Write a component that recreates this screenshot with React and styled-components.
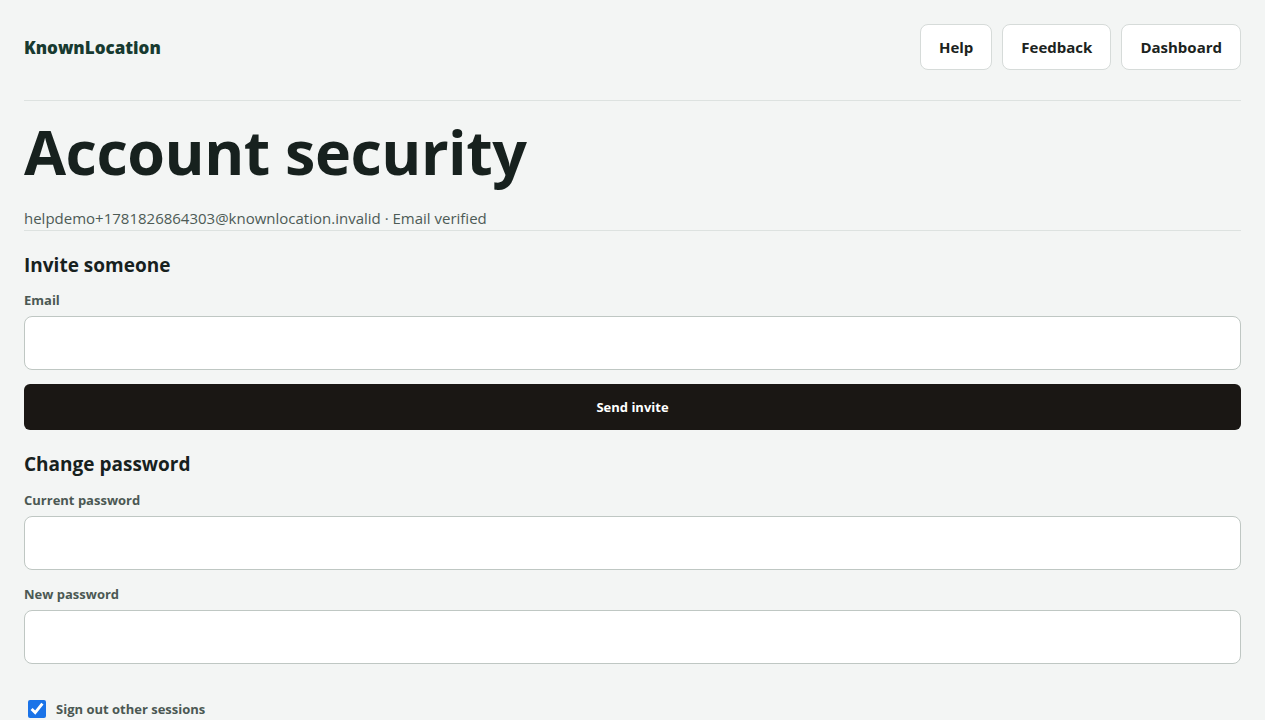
import React from 'react'
import styled, { createGlobalStyle } from 'styled-components';

const GlobalStyle = createGlobalStyle`
  html, body {
    margin: 0;
    padding: 0;
    background: #f3f5f4;
  }
  body {
    font-family: "Open Sans", "Noto Sans", "Liberation Sans", sans-serif;
    color: #17211e;
  }
  * { box-sizing: border-box; }
`;

const App = () => {
  return (
    <>
      <GlobalStyle />
      <Page>
        <Header>
          <Logo>KnownLocation</Logo>
          <Nav>
            <NavButton>Help</NavButton>
            <NavButton>Feedback</NavButton>
            <NavButton>Dashboard</NavButton>
          </Nav>
        </Header>

        <Title>Account security</Title>
        <Meta>helpdemo+1781826864303@knownlocation.invalid · Email verified</Meta>

        <Section>
          <SectionTitle>Invite someone</SectionTitle>
          <Field>
            <Label>Email</Label>
            <Input type="email" />
          </Field>
          <PrimaryButton>Send invite</PrimaryButton>
        </Section>

        <Section>
          <SectionTitle>Change password</SectionTitle>
          <Field $spaced>
            <Label>Current password</Label>
            <Input type="password" />
          </Field>
          <Field $spaced>
            <Label>New password</Label>
            <Input type="password" />
          </Field>
          <CheckRow>
            <Checkbox type="checkbox" defaultChecked />
            Sign out other sessions
          </CheckRow>
        </Section>
      </Page>
    </>
  )
}

export default App;

const Page = styled.div`
    padding: 24px 24px 40px;
`;

const Header = styled.header`
    display: flex;
    justify-content: space-between;
    align-items: center;
    padding-bottom: 30px;
    border-bottom: 1px solid #dde2e0;
`;

const Logo = styled.div`
    font-size: 17px;
    font-weight: 800;
    color: #173a30;
`;

const Nav = styled.nav`
    display: flex;
    gap: 10px;
`;

const NavButton = styled.button`
    height: 46px;
    padding: 0 18px;
    background: #ffffff;
    border: 1px solid #d6dbd9;
    border-radius: 8px;
    font-family: inherit;
    font-size: 15px;
    font-weight: 700;
    color: #1b2320;
    cursor: pointer;
`;

const Title = styled.h1`
    margin: 13px 0 0;
    font-size: 61px;
    font-weight: 700;
    line-height: 76px;
    letter-spacing: -0.5px;
    color: #17211e;
`;

const Meta = styled.p`
    margin: 18px 0 0;
    padding-bottom: 2px;
    font-size: 15px;
    color: #4d5b56;
    border-bottom: 1px solid #dde2e0;
`;

const Section = styled.section`
    display: flex;
    flex-direction: column;
    gap: 14px;
    margin-top: 20px;
`;

const SectionTitle = styled.h2`
    margin: 0 0 -2px;
    font-size: 19px;
    font-weight: 700;
    color: #17211e;
    line-height: 28px;
`;

const Field = styled.label`
    display: flex;
    flex-direction: column;
    gap: 7px;
    margin-top: ${props => props.$spaced ? '1px' : '0'};
`;

const Label = styled.span`
    font-size: 13px;
    font-weight: 700;
    color: #4b5853;
`;

const Input = styled.input`
    height: 54px;
    width: 100%;
    padding: 0 14px;
    background: #ffffff;
    border: 1px solid #bfc7c3;
    border-radius: 8px;
    font-family: inherit;
    font-size: 16px;
`;

const PrimaryButton = styled.button`
    height: 46px;
    width: 100%;
    background: #1a1714;
    color: #ffffff;
    border: none;
    border-radius: 6px;
    font-family: inherit;
    font-size: 13px;
    font-weight: 700;
    cursor: pointer;
`;

const CheckRow = styled.label`
    display: flex;
    align-items: center;
    gap: 10px;
    margin-top: 22px;
    font-size: 13px;
    font-weight: 700;
    color: #4b5853;
`;

const Checkbox = styled.input`
    width: 18px;
    height: 18px;
    margin: 0 0 0 4px;
    accent-color: #1a73e8;
`;
